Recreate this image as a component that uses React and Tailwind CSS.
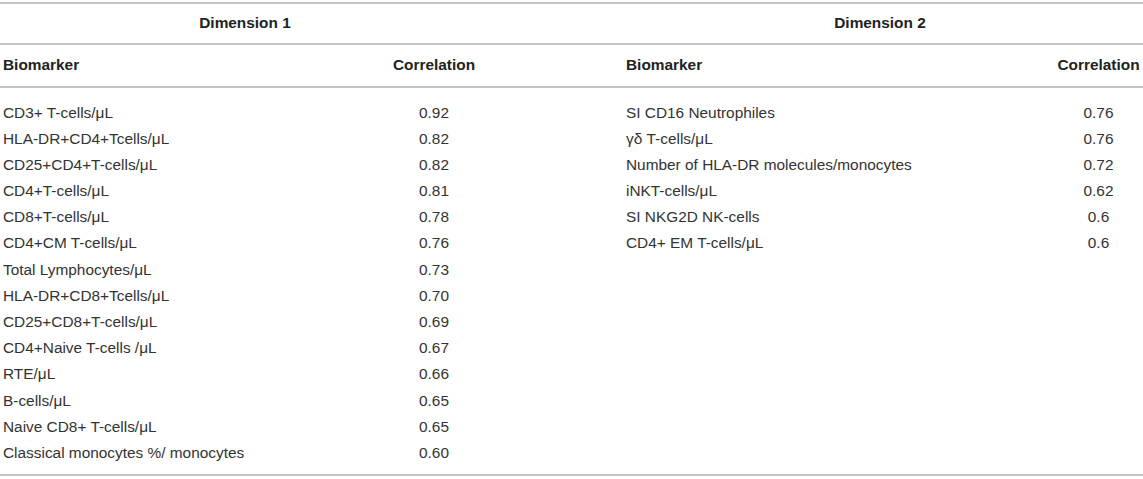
const dim1 = [
  ["CD3+ T-cells/μL", "0.92"],
  ["HLA-DR+CD4+Tcells/μL", "0.82"],
  ["CD25+CD4+T-cells/μL", "0.82"],
  ["CD4+T-cells/μL", "0.81"],
  ["CD8+T-cells/μL", "0.78"],
  ["CD4+CM T-cells/μL", "0.76"],
  ["Total Lymphocytes/μL", "0.73"],
  ["HLA-DR+CD8+Tcells/μL", "0.70"],
  ["CD25+CD8+T-cells/μL", "0.69"],
  ["CD4+Naive T-cells /μL", "0.67"],
  ["RTE/μL", "0.66"],
  ["B-cells/μL", "0.65"],
  ["Naive CD8+ T-cells/μL", "0.65"],
  ["Classical monocytes %/ monocytes", "0.60"],
];

const dim2 = [
  ["SI CD16 Neutrophiles", "0.76"],
  ["γδ T-cells/μL", "0.76"],
  ["Number of HLA-DR molecules/monocytes", "0.72"],
  ["iNKT-cells/μL", "0.62"],
  ["SI NKG2D NK-cells", "0.6"],
  ["CD4+ EM T-cells/μL", "0.6"],
];

const cols = "grid grid-cols-[392px_84px_150px_431px_86px]";

export default function App() {
  return (
    <div className="w-[1143px] bg-white pt-[2px] font-['Liberation_Sans',Arial,sans-serif] text-[15.4px] text-[#333]">
      <div className="border-t-2 border-b-2 border-[#c4c4c4]">
        <div className="flex h-[39px] items-center pb-[2px] font-bold text-[#222]">
          <div className="w-[490px] text-center">Dimension 1</div>
          <div className="w-[127px]" />
          <div className="flex-1 text-center">Dimension 2</div>
        </div>
      </div>

      <div className={`${cols} h-[43px] items-center border-b-2 border-[#c4c4c4] pb-[2px] font-bold text-[#222]`}>
        <div className="pl-[3px]">Biomarker</div>
        <div className="text-center">Correlation</div>
        <div />
        <div>Biomarker</div>
        <div className="pr-[3px] text-center">Correlation</div>
      </div>

      <div className="border-b-2 border-[#c4c4c4] pt-[11px] pb-[8px]">
        {dim1.map(([name, value], i) => {
          const right = dim2[i];
          return (
            <div key={name} className={`${cols} h-[26.2px] items-center`}>
              <div className="pl-[3px]">{name}</div>
              <div className="text-center">{value}</div>
              <div />
              <div>{right ? right[0] : ""}</div>
              <div className="pr-[3px] text-center">{right ? right[1] : ""}</div>
            </div>
          );
        })}
      </div>
    </div>
  );
}
